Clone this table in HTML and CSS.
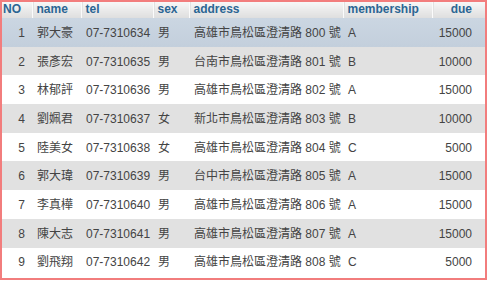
FILE: index.html
```html
<!DOCTYPE html>
<html lang="zh-Hant">
<head>
<meta charset="utf-8">
<link rel="stylesheet" href="styles.css">
</head>
<body>
<div class="frame">
<table class="grid">
<colgroup>
<col class="c-no"><col class="c-name"><col class="c-tel"><col class="c-sex"><col class="c-addr"><col class="c-mem"><col class="c-due">
</colgroup>
<thead>
<tr><th class="num">NO</th><th>name</th><th>tel</th><th>sex</th><th>address</th><th>membership</th><th class="num">due</th></tr>
</thead>
<tbody>
<tr class="sel"><td class="num">1</td><td>郭大豪</td><td>07-7310634</td><td>男</td><td>高雄市鳥松區澄清路 800 號</td><td>A</td><td class="num">15000</td></tr>
<tr class="alt"><td class="num">2</td><td>張彥宏</td><td>07-7310635</td><td>男</td><td>台南市鳥松區澄清路 801 號</td><td>B</td><td class="num">10000</td></tr>
<tr><td class="num">3</td><td>林郁評</td><td>07-7310636</td><td>男</td><td>高雄市鳥松區澄清路 802 號</td><td>A</td><td class="num">15000</td></tr>
<tr class="alt"><td class="num">4</td><td>劉姵君</td><td>07-7310637</td><td>女</td><td>新北市鳥松區澄清路 803 號</td><td>B</td><td class="num">10000</td></tr>
<tr><td class="num">5</td><td>陸美女</td><td>07-7310638</td><td>女</td><td>高雄市鳥松區澄清路 804 號</td><td>C</td><td class="num">5000</td></tr>
<tr class="alt"><td class="num">6</td><td>郭大瑋</td><td>07-7310639</td><td>男</td><td>台中市鳥松區澄清路 805 號</td><td>A</td><td class="num">15000</td></tr>
<tr><td class="num">7</td><td>李真樺</td><td>07-7310640</td><td>男</td><td>高雄市鳥松區澄清路 806 號</td><td>A</td><td class="num">15000</td></tr>
<tr class="alt"><td class="num">8</td><td>陳大志</td><td>07-7310641</td><td>男</td><td>高雄市鳥松區澄清路 807 號</td><td>A</td><td class="num">15000</td></tr>
<tr><td class="num">9</td><td>劉飛翔</td><td>07-7310642</td><td>男</td><td>高雄市鳥松區澄清路 808 號</td><td>C</td><td class="num">5000</td></tr>
</tbody>
</table>
</div>
</body>
</html>
```

FILE: styles.css
```css
html, body {
  margin: 0;
  padding: 0;
  background: #fff;
}
body {
  font-family: "Liberation Sans", Arial, "Noto Sans CJK TC", sans-serif;
  font-size: 12px;
  color: #444;
}
.frame {
  width: 483px;
  height: 276px;
  border: 2px solid #f27d7d;
  overflow: hidden;
}
.grid {
  width: 483px;
  border-collapse: collapse;
  table-layout: fixed;
}
.c-no { width: 30px; }
.c-name { width: 49px; }
.c-tel { width: 72px; }
.c-sex { width: 36px; }
.c-addr { width: 154px; }
.c-mem { width: 89px; }
.c-due { width: 53px; }

.grid th {
  height: 16px;
  padding: 0 4px;
  text-align: left;
  font-weight: bold;
  color: #2b6593;
  background: linear-gradient(#f7f7f7, #dedede);
  border-left: 1px solid #fbfbfb;
  box-shadow: inset 1px 0 0 #e2e2e2;
  line-height: 15px;
  vertical-align: top;
  white-space: nowrap;
}
.grid th:first-child {
  border-left: none;
  box-shadow: none;
  padding-left: 1px;
}
.grid td {
  height: 27.7px;
  padding: 1px 4px 0 5px;
  white-space: nowrap;
  line-height: 14px;
}
.grid td.num, .grid th.num {
  text-align: right;
  padding-right: 13px;
}
.grid td:first-child {
  padding-right: 7px;
}
.grid tr.alt td {
  background: #e1e1e1;
}
.grid tr.sel td {
  background: linear-gradient(#cbd6e2, #c3cfdc);
}
```
